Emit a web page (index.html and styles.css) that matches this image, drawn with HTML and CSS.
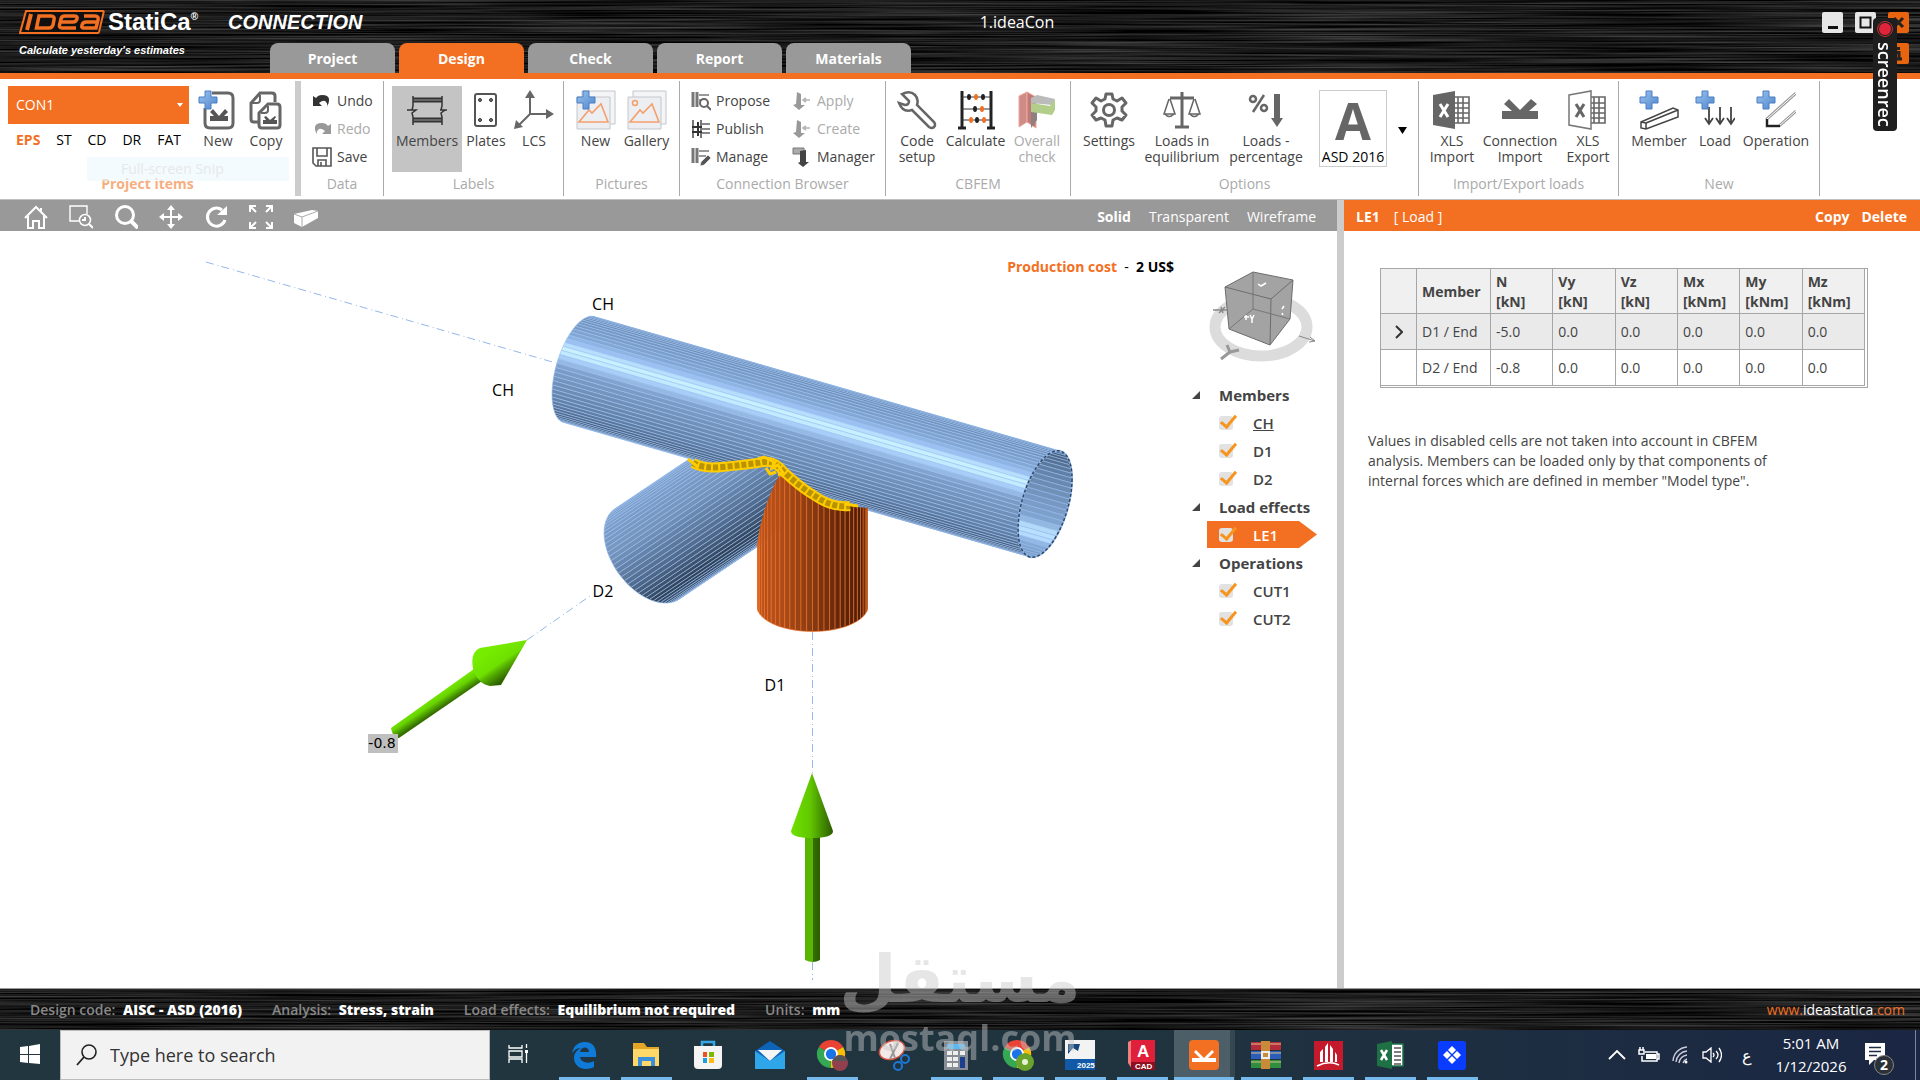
FILE: index.html
```html
<!DOCTYPE html>
<html lang="en">
<head>
  <meta charset="UTF-8" />
  <meta name="viewport" content="width=device-width, initial-scale=1" />
  <title>1.ideaCon</title>
  <link rel="stylesheet" href="styles.css">
</head>
<body>

  <!-- shared icons and filters -->
  <svg class="defs" width="0" height="0" aria-hidden="true">
    <filter id="brushed" x="0" y="0" width="100%" height="100%" color-interpolation-filters="sRGB">
      <feTurbulence type="fractalNoise" baseFrequency="0.004 0.55" numOctaves="3" seed="8" />
      <feColorMatrix values="0.45 0 0 0 -0.12  0.45 0 0 0 -0.12  0.45 0 0 0 -0.12  0 0 0 0 1" />
    </filter>
    <linearGradient id="plusFill" x1="0" y1="0" x2="1" y2="1">
      <stop offset="0" stop-color="#9cc4ee" /><stop offset="1" stop-color="#4f86cc" />
    </linearGradient>
    <symbol id="plus" viewBox="0 0 20 20">
      <path d="M7 1h6v6h6v6h-6v6H7v-6H1V7h6z" fill="url(#plusFill)" stroke="#4a7fc6" />
    </symbol>
    <symbol id="picture" viewBox="0 0 40 40">
      <path d="M6 1h33v33H6z" fill="#f4f5f7" stroke="#c3c6cc" />
      <path d="M1 7h33v32H1z" fill="#eceef2" stroke="#c3c6cc" />
      <path d="M3 32h29L25 14l-9 9-3-3z" fill="none" stroke="#f3a06c" stroke-width="1.6" />
    </symbol>
    <symbol id="sheet" viewBox="0 0 40 40">
      <path d="M22 7h15v26H22M26 7v26M31 7v26M22 13h15M22 18h15M22 23h15M22 28h15" fill="none" stroke="#666" stroke-width="1.6" />
    </symbol>
    <symbol id="chrome" viewBox="0 0 32 32">
      <path d="M16 16L3 8.500A15 15 0 0 1 29 8.500z" fill="#ea4335" />
      <path d="M16 16L29 8.500A15 15 0 0 1 16 31z" fill="#fbbc04" />
      <path d="M16 16v15A15 15 0 0 1 3 8.500z" fill="#34a853" />
      <circle cx="16" cy="16" r="7.500" fill="#fff" /><circle cx="16" cy="16" r="5.500" fill="#1a73e8" />
    </symbol>
    <symbol id="beam" viewBox="0 0 20 20">
      <path d="M2 1v15M6 1v15" stroke="#777" stroke-width="3" fill="none" />
      <path d="M8 4h10M8 9h7" stroke="#999" stroke-width="2" fill="none" />
    </symbol>
    <symbol id="column" viewBox="0 0 20 20">
      <path d="M5 1l4 2v11h4l-6 5-6-5 3-1z" fill="#999" />
      <path d="M11 9h7M14 7l-3 2 3 2" stroke="#b5b5b5" stroke-width="1.6" fill="none" />
    </symbol>
  </svg>

  <header class="titlebar">
    <svg class="metal" aria-hidden="true"><rect width="100%" height="100%" filter="url(#brushed)" /></svg>
    <div class="brand">
      <div class="brand-row">
        <svg class="logo" viewBox="0 0 86 24" width="86" height="24" role="img" aria-label="IDEA">
          <path d="M7 1h77q1 0 .7 1L80 22q-.3 1-1 1H1z" fill="#101010" stroke="#f36f21" stroke-width="2" />
          <path d="M12 4L8 20" stroke="#f36f21" stroke-width="4" />
          <path d="M20 6h12q4 0 3 4l-1 5q-1 3-4 3H17.500z" fill="none" stroke="#f36f21" stroke-width="3.500" />
          <path d="M57 18H43q-3 0-2.500-3l1.500-6q.5-3 4-3h9q4 0 3 3t-4 3H42" fill="none" stroke="#f36f21" stroke-width="3.500" />
          <path d="M65 6h11q4 0 3 4l-2 8H65q-3 0-2-3t4-3h11" fill="none" stroke="#f36f21" stroke-width="3.500" />
        </svg>
        <span class="brand-name">StatiCa<sup>®</sup></span>
        <span class="brand-app">CONNECTION</span>
      </div>
      <p class="slogan">Calculate yesterday's estimates</p>
    </div>
    <nav class="tabs">
      <button>Project</button>
      <button class="active">Design</button>
      <button>Check</button>
      <button>Report</button>
      <button>Materials</button>
    </nav>
    <h1 class="doc-title">1.ideaCon</h1>
    <div class="win-buttons">
      <button aria-label="Minimize"><svg width="21" height="21"><path d="M6 15.500h10" stroke="#111" stroke-width="3" /></svg></button>
      <button aria-label="Maximize"><svg width="21" height="21"><path d="M5.500 5.500h10v10h-10z" stroke="#111" stroke-width="2" fill="none" /></svg></button>
      <button class="orange" aria-label="Close"><svg width="21" height="21"><path d="M6 6l9 9M15 6l-9 9" stroke="#222" stroke-width="3" /></svg></button>
      <button class="orange info" aria-label="About"><svg width="21" height="21"><path d="M10.500 4v3M8 9.500h3V16M7 16h7" stroke="#222" stroke-width="3" fill="none" /></svg></button>
    </div>
  </header>

  <div class="ribbon">
    <section class="group items-group">
      <div class="tools">
        <div class="project-item">
          <div class="select-wrap">
            <select aria-label="Project item"><option>CON1</option></select>
          </div>
          <div class="kinds">
            <button class="on">EPS</button><button>ST</button><button>CD</button><button>DR</button><button>FAT</button>
          </div>
        </div>
        <button class="tool w48">
          <svg width="40" height="40" viewBox="0 0 40 40"><path d="M14 3h16q5 0 5 5v25q0 5-5 5H12q-5 0-5-5V18" fill="none" stroke="#666" stroke-width="3" /><path d="M12 26h4l-4-4 3-3 6 7 6-7 3 3-4 4h4v5H12z" fill="#555" /><use href="#plus" width="20" height="20" /></svg>
          New
        </button>
        <button class="tool w48">
          <svg width="40" height="40" viewBox="0 0 40 40"><path d="M13 32H8q-3 0-3-3V13L14 3h12q3 0 3 3v6" fill="none" stroke="#666" stroke-width="3" /><path d="M14 5v5q0 3-3 3H6" fill="none" stroke="#666" stroke-width="2" /><path d="M13 23l9-9h9q3 0 3 3v18q0 3-3 3H16q-3 0-3-3z" fill="#fff" stroke="#666" stroke-width="3" /><path d="M22 16v4q0 3-3 3h-4" fill="none" stroke="#666" stroke-width="2" /><path d="M17 30h3l-2-3 2-1 4 4 5-4 1 1-2 3h3v4H17z" fill="#555" /></svg>
          Copy
        </button>
      </div>
      <h2 class="accent">Project items</h2>
      <span class="snip">Full-screen Snip</span>
    </section>

    <section class="group w83">
      <div class="tools rows">
        <button class="mini"><svg viewBox="0 0 20 20"><path d="M1 5v10h9l-3-3q5-4 7-1 2 2 1 5 6-12-5-12-4 0-6 3z" fill="#333" /></svg>Undo</button>
        <button class="mini" disabled><svg viewBox="0 0 20 20"><path d="M19 5v10h-9l3-3q-5-4-7-1-2 2-1 5Q-1 4 10 4q4 0 6 3z" fill="#999" /></svg>Redo</button>
        <button class="mini"><svg viewBox="0 0 20 20"><path d="M1 1h18v18H4l-3-3zM5 1v8h10V1M6 19v-6h8v6M9 15v4" fill="none" stroke="#555" stroke-width="1.6" /></svg>Save</button>
      </div>
      <h2>Data</h2>
    </section>

    <section class="group w180">
      <div class="tools pad8">
        <button class="tool w70 selected">
          <svg width="40" height="40" viewBox="0 0 40 40"><path d="M6 10h29M6 30h29" stroke="#333" stroke-width="5" /><path d="M6 10h29M6 30h29" stroke="#999" /><path d="M6 6v10l-1 4h4l-4 3 1 4v8M35 6v10l-1 4h4l-4 3 1 4v8M0 20h9M33 20h7" stroke="#333" stroke-width="1.500" fill="none" /></svg>
          Members
        </button>
        <button class="tool w48">
          <svg width="40" height="40" viewBox="0 0 40 40"><rect x="9" y="4" width="21" height="32" rx="2" fill="#fff" stroke="#555" stroke-width="2" /><g fill="#777" stroke="#333"><circle cx="14" cy="10" r="1.500" /><circle cx="25" cy="10" r="1.500" /><circle cx="14" cy="30" r="1.500" /><circle cx="25" cy="30" r="1.500" /></g></svg>
          Plates
        </button>
        <button class="tool w48">
          <svg width="40" height="40" viewBox="0 0 40 40"><path d="M16 4v20h20M16 24L3 37" stroke="#666" stroke-width="2" fill="none" /><path d="M16 0l5 8H11zM40 24l-8-5v10zM0 39l2-9 7 7z" fill="#666" /></svg>
          LCS
        </button>
      </div>
      <h2>Labels</h2>
    </section>

    <section class="group w116">
      <div class="tools pad6">
        <button class="tool w51"><svg width="40" height="40" viewBox="0 0 40 40"><use href="#picture" width="40" height="40" /><use href="#plus" width="20" height="20" /></svg>New</button>
        <button class="tool w51"><svg width="40" height="40" viewBox="0 0 40 40"><use href="#picture" width="40" height="40" /><circle cx="8" cy="13" r="2.500" fill="none" stroke="#f3a06c" stroke-width="1.500" /></svg>Gallery</button>
      </div>
      <h2>Pictures</h2>
    </section>

    <section class="group w206">
      <div class="tools pairs">
        <button class="mini"><svg viewBox="0 0 20 20"><use href="#beam" width="20" height="20" /><circle cx="13" cy="12" r="4" fill="#fff" stroke="#666" stroke-width="2" /><path d="M16 15l4 4" stroke="#666" stroke-width="2" /></svg>Propose</button>
        <button class="mini" disabled><svg viewBox="0 0 20 20"><use href="#column" width="20" height="20" /></svg>Apply</button>
        <button class="mini"><svg viewBox="0 0 20 20"><path d="M2 1v18M10 1v18" stroke="#777" stroke-width="2" /><path d="M7 3v14M1 8h10M1 13h10" stroke="#333" stroke-width="2" /><path d="M11 5h8M11 10h8M11 14h8" stroke="#888" stroke-width="2" /></svg>Publish</button>
        <button class="mini" disabled><svg viewBox="0 0 20 20"><use href="#column" width="20" height="20" /></svg>Create</button>
        <button class="mini"><svg viewBox="0 0 20 20"><use href="#beam" width="20" height="20" /><path d="M9 19l1-4 7-7 3 3-7 7z" fill="#555" stroke="#fff" stroke-width=".6" /></svg>Manage</button>
        <button class="mini"><svg viewBox="0 0 20 20"><path d="M1 1h11v6H1z" fill="#aaa" stroke="#777" /><path d="M8 4l6-1v12h3l-6 5-5-4 2-1z" fill="#444" /></svg>Manager</button>
      </div>
      <h2>Connection Browser</h2>
    </section>

    <section class="group w185">
      <div class="tools pad3">
        <button class="tool w56">
          <svg width="40" height="40" viewBox="0 0 40 40"><path d="M5 4q8-4 13 1 4 4 2 10l17 17q2 3 0 5t-5 0L15 20q-9 3-13-7l6 2q4 0 4-4z" fill="#fff" stroke="#666" stroke-width="2.500" /></svg>
          Code setup
        </button>
        <button class="tool w61">
          <svg width="40" height="40" viewBox="0 0 40 40"><path d="M6 1v37M35 1v37M2 38h8M31 38h8" stroke="#222" stroke-width="3" /><path d="M6 7h29M6 19h29M6 30h29" stroke="#333" /><g fill="#222"><ellipse cx="13" cy="7" rx="2" ry="3" /><ellipse cx="27" cy="7" rx="2" ry="3" /><ellipse cx="19" cy="19" rx="2" ry="3" /><ellipse cx="21" cy="30" rx="2" ry="3" /></g><g fill="#f36f21"><ellipse cx="20" cy="7" rx="2" ry="3" /><ellipse cx="26" cy="19" rx="2" ry="3" /><ellipse cx="15" cy="30" rx="2" ry="3" /><ellipse cx="28" cy="30" rx="2" ry="3" /></g></svg>
          Calculate
        </button>
        <button class="tool w62" disabled>
          <svg width="40" height="40" viewBox="0 0 40 40"><path d="M2 6l8-4v30l-8 5z" fill="#cf8b88" stroke="#eba99c" /><path d="M10 2l9 5v31l-9-6z" fill="#c27a78" stroke="#eba99c" /><path d="M14 16l6 3v11l-6 8z" fill="#8f8080" /><path d="M14 8l6-3 18 4-3 6-21-2z" fill="#bbb" /><path d="M14 13l19 3 5-7v11l-3 5-21-3z" fill="#b3cd8b" /></svg>
          Overall check
        </button>
      </div>
      <h2>CBFEM</h2>
    </section>

    <section class="group w348">
      <div class="tools pad5">
        <button class="tool w66">
          <svg width="40" height="40" viewBox="0 0 40 40"><path d="M17 4h6l1 5 4 2 5-3 4 5-4 4v4l4 4-4 5-5-2-4 2-1 6h-6l-1-6-4-2-5 2-4-5 4-4v-4l-4-4 4-5 5 3 4-2z" fill="none" stroke="#666" stroke-width="3" stroke-linejoin="round" /><circle cx="20" cy="20" r="5.500" fill="none" stroke="#666" stroke-width="3" /></svg>
          Settings
        </button>
        <button class="tool w80">
          <svg width="40" height="40" viewBox="0 0 40 40"><path d="M20 2v34M8 8h24M13 37h14" stroke="#666" stroke-width="3" /><path d="M7 9L2 24h11L8 9M32 9l-5 15h11L33 9M3 24q4 5 9 0M28 24q4 5 9 0" fill="none" stroke="#666" stroke-width="1.500" /></svg>
          Loads in equilibrium
        </button>
        <button class="tool w88">
          <svg width="40" height="40" viewBox="0 0 40 40"><circle cx="7" cy="9" r="3" fill="none" stroke="#666" stroke-width="2.500" /><circle cx="18" cy="18" r="3" fill="none" stroke="#666" stroke-width="2.500" /><path d="M18 5L7 22" stroke="#666" stroke-width="2.500" /><path d="M28 4h6v24h3l-6 9-6-9h3z" fill="#666" /></svg>
          Loads - percentage
        </button>
        <button class="tool code"><strong>A</strong>ASD 2016</button>
        <button class="more" aria-label="More design codes"><svg width="9" height="7"><path d="M0 0h9L4.500 7z" /></svg></button>
      </div>
      <h2>Options</h2>
    </section>

    <section class="group w200">
      <div class="tools pad3">
        <button class="tool w60"><svg width="40" height="40" viewBox="0 0 40 40"><use href="#sheet" width="40" height="40" /><path d="M1 5l22-4v38L1 35z" fill="#666" /><path d="M8 14l8 13M16 14L8 27" stroke="#fff" stroke-width="3" /></svg>XLS Import</button>
        <button class="tool w76"><svg width="40" height="40" viewBox="0 0 40 40"><path d="M2 21h10l-8-7 5-5 11 11L31 9l6 5-8 7h9v8H2z" fill="#666" /></svg>Connection Import</button>
        <button class="tool w60"><svg width="40" height="40" viewBox="0 0 40 40"><use href="#sheet" width="40" height="40" /><path d="M1 5l22-4v38L1 35z" fill="#fff" stroke="#777" stroke-width="1.500" /><path d="M8 14l8 13M16 14L8 27" stroke="#666" stroke-width="3" /></svg>XLS Export</button>
      </div>
      <h2>Import/Export loads</h2>
    </section>

    <section class="group w201">
      <div class="tools pad9">
        <button class="tool w62"><svg width="40" height="40" viewBox="0 0 40 40"><path d="M2 32l32-14 5 2v7L7 39l-5-1zM2 32l5 1v6M7 33l32-13" fill="#fff" stroke="#444" stroke-width="1.500" /><use href="#plus" width="20" height="20" /></svg>Member</button>
        <button class="tool w50"><svg width="40" height="40" viewBox="0 0 40 40"><path d="M14 17v17M25 17v17M36 17v17M10 28l4 6 4-6M21 28l4 6 4-6M32 28l4 6 4-6" fill="none" stroke="#444" stroke-width="1.800" /><use href="#plus" width="20" height="20" /></svg>Load</button>
        <button class="tool w72"><svg width="40" height="40" viewBox="0 0 40 40"><path d="M40 3L11 29v7h12l17-15" fill="none" stroke="#999" stroke-width="3" /><path d="M40 3L11 29M23 36l17-15" fill="none" stroke="#fff" /><path d="M11 29v7h13" fill="none" stroke="#222" stroke-width="2" /><use href="#plus" width="20" height="20" /></svg>Operation</button>
      </div>
      <h2>New</h2>
    </section>
  </div>

  <main class="workspace">
    <section class="view">
      <div class="view-bar">
        <button aria-label="Home"><svg viewBox="0 0 24 24"><path d="M1 13L12 2l11 11M4 11v12h5v-7h6v7h5V11M17 3v4" fill="none" stroke="#fff" stroke-width="2" /></svg></button>
        <button aria-label="Zoom window"><svg viewBox="0 0 24 24"><path d="M11 16H1V1h17v8" fill="none" stroke="#fff" stroke-width="1.400" /><circle cx="16" cy="15" r="5.500" fill="none" stroke="#fff" stroke-width="1.500" /><path d="M20 19l4 4M16 12v3h-3" stroke="#fff" stroke-width="2" fill="none" /></svg></button>
        <button aria-label="Zoom"><svg viewBox="0 0 24 24"><circle cx="11" cy="10" r="8.500" fill="none" stroke="#fff" stroke-width="3" /><path d="M17 16l7 7" stroke="#fff" stroke-width="4" /></svg></button>
        <button aria-label="Pan"><svg viewBox="0 0 24 24"><path d="M12 3v18M3 12h18" stroke="#fff" stroke-width="2" /><path d="M12 0l4 5H8zM12 24l4-5H8zM0 12l5-4v8zM24 12l-5-4v8z" fill="#fff" /></svg></button>
        <button aria-label="Rotate"><svg viewBox="0 0 24 24"><path d="M18 5a9 9 0 1 0 3 10" fill="none" stroke="#fff" stroke-width="3" /><path d="M23 1v9H13z" fill="#fff" /></svg></button>
        <button aria-label="Fit"><svg viewBox="0 0 24 24"><path d="M1 7V1h6M1 1l6 6M17 1h6v6M23 1l-6 6M1 17v6h6M1 23l6-6M17 23h6v-6M23 23l-6-6" fill="none" stroke="#fff" stroke-width="2" /></svg></button>
        <button aria-label="Perspective"><svg viewBox="0 0 24 24"><path d="M0 9l18-4 6 1v7L8 22l-8-4z" fill="#fff" /><path d="M0 9l8 3 16-6M8 12v10" stroke="#aaa" fill="none" /></svg></button>
        <div class="modes">
          <button class="on">Solid</button>
          <button>Transparent</button>
          <button>Wireframe</button>
        </div>
      </div>

      <div class="canvas">
        <svg id="scene" class="scene" width="1180" height="757" viewBox="0 231 1180 757">
          <defs>
            <clipPath id="clipOpening"><path id="openingClip" /></clipPath>
            <clipPath id="clipD2"><path d="M580 500L690 459Q704 469 765 464L782 470V640H580z" /></clipPath>
            <clipPath id="clipD1"><path d="M757 545Q762 506 781 472Q812 504 868 508V640H757z" /></clipPath>
            <linearGradient id="green"><stop offset="0" stop-color="#6fe000" /><stop offset=".45" stop-color="#62c800" /><stop offset="1" stop-color="#2c5c00" /></linearGradient>
            <linearGradient id="shaft"><stop offset="0" stop-color="#57b400" /><stop offset=".5" stop-color="#59b800" /><stop offset=".55" stop-color="#347000" /><stop offset="1" stop-color="#2c5c00" /></linearGradient>
            <linearGradient id="slantShaft" gradientUnits="userSpaceOnUse" x1="430" y1="698" x2="438" y2="710"><stop offset="0" stop-color="#74ea00" /><stop offset=".45" stop-color="#68d400" /><stop offset="1" stop-color="#356f00" /></linearGradient>
            <linearGradient id="slantCone" gradientUnits="userSpaceOnUse" x1="488" y1="652" x2="506" y2="678"><stop offset="0" stop-color="#76ec00" /><stop offset=".5" stop-color="#6fe000" /><stop offset=".65" stop-color="#58b400" /><stop offset="1" stop-color="#2e6200" /></linearGradient>
          </defs>
          <path class="axis" d="M206 262L556 363M527 640L590 596M812.500 632V773M812.500 962V980" />
          <g id="ch"></g>
          <g id="d2" clip-path="url(#clipD2)"></g>
          <g id="d1" clip-path="url(#clipD1)"></g>
          <g id="weld"></g>
          <path d="M391 728L474 669 482 681 399 738Q393 739 391 728z" fill="url(#slantShaft)" />
          <path d="M527 640L480 648Q470 652 473 669 478 684 490 686L501 685z" fill="url(#slantCone)" />
          <path d="M805 830h15v130q-7 4-15 0z" fill="url(#shaft)" />
          <path d="M812 773l21 58q0 7-21 7t-21-7z" fill="url(#green)" />
          <rect x="368" y="734" width="30" height="19" fill="#bfbfbf" />
          <g class="scene-text">
            <text x="603" y="310">CH</text>
            <text x="503" y="396">CH</text>
            <text x="603" y="597">D2</text>
            <text x="775" y="691">D1</text>
            <text class="value" x="382" y="748">-0.8</text>
          </g>
        </svg>

        <p class="cost"><b class="accent">Production cost</b> &nbsp;-&nbsp; <b>2 US$</b></p>

        <aside class="side">
          <svg class="cube" width="110" height="92" viewBox="0 0 110 92">
            <ellipse cx="53" cy="56" rx="46" ry="29" fill="none" stroke="#dcdcdc" stroke-width="11" />
            <path d="M17 16L45 1l40 8-3 39-20 26-41-16z" fill="#a3a3a3" />
            <path d="M17 16l46 12 22-19-40-8zM63 28l-1 46M17 16l4 42 41 16 20-26 3-39" fill="none" stroke="#6d6d6d" />
            <path d="M45 1v37l37 10M45 38L21 58" fill="none" stroke="#777" />
            <path d="M5 39h14M11 42l6-6M13 36l2 6" stroke="#888" stroke-width="1.500" />
            <path d="M91 65l16 5M102 66l5 4-6 1" stroke="#888" fill="none" />
            <path d="M13 88l9-7 9-2M22 81l-3-7" stroke="#999" stroke-width="3" fill="none" />
            <path d="M36 46h5M38 44v5M42 44l2 4 2-4M44 48v4M50 13l3 2 5-3M74 38l2-3M74 42l1 2" stroke="#fff" stroke-width="1.500" fill="none" />
          </svg>
          <ul class="tree">
            <li class="head">Members</li>
            <li><label><input type="checkbox" checked><u>CH</u></label></li>
            <li><label><input type="checkbox" checked>D1</label></li>
            <li><label><input type="checkbox" checked>D2</label></li>
            <li class="head">Load effects</li>
            <li class="current"><label><input type="checkbox" checked>LE1</label></li>
            <li class="head">Operations</li>
            <li><label><input type="checkbox" checked>CUT1</label></li>
            <li><label><input type="checkbox" checked>CUT2</label></li>
          </ul>
        </aside>
      </div>
    </section>

    <section class="props">
      <div class="props-bar">
        <b>LE1</b><span>[ Load ]</span>
        <div class="props-actions"><button>Copy</button><button>Delete</button></div>
      </div>
      <div class="table-frame">
        <table>
          <thead>
            <tr><th class="c-mark"></th><th class="c-member">Member</th><th>N<br>[kN]</th><th>Vy<br>[kN]</th><th>Vz<br>[kN]</th><th>Mx<br>[kNm]</th><th>My<br>[kNm]</th><th>Mz<br>[kNm]</th></tr>
          </thead>
          <tbody>
            <tr class="current"><td class="mark"><svg width="8" height="14"><path d="M1 1l6 6-6 6" fill="none" stroke="#333" stroke-width="2" /></svg></td><td>D1 / End</td><td>-5.0</td><td>0.0</td><td>0.0</td><td>0.0</td><td>0.0</td><td>0.0</td></tr>
            <tr><td></td><td>D2 / End</td><td>-0.8</td><td>0.0</td><td>0.0</td><td>0.0</td><td>0.0</td><td>0.0</td></tr>
          </tbody>
        </table>
      </div>
      <p class="note">Values in disabled cells are not taken into account in CBFEM<br>analysis. Members can be loaded only by that components of<br>internal forces which are defined in member "Model type".</p>
    </section>
  </main>

  <footer class="status">
    <svg class="metal" aria-hidden="true"><rect width="100%" height="100%" filter="url(#brushed)" /></svg>
    <span>Design code: <b>AISC - ASD (2016)</b></span>
    <span>Analysis: <b>Stress, strain</b></span>
    <span>Load effects: <b>Equilibrium not required</b></span>
    <span>Units: <b>mm</b></span>
    <a href="#"><i>www.</i>ideastatica<i>.com</i></a>
  </footer>

  <div class="taskbar">
    <button class="start" aria-label="Start"><svg width="20" height="20"><path d="M0 3l8-1v8H0zM9 2l11-2v10H9zM0 11h8v8l-8-1zM9 11h11v9L9 19z" fill="#fff" /></svg></button>
    <label class="search">
      <svg width="22" height="22" viewBox="0 0 22 22"><circle cx="13" cy="8" r="7" fill="none" stroke="#222" stroke-width="1.600" /><path d="M8 13l-7 8" stroke="#222" stroke-width="1.800" /></svg>
      <input type="text" placeholder="Type here to search" aria-label="Search">
    </label>
    <button class="taskview" aria-label="Task view"><svg width="22" height="20"><path d="M1 1v3h13V1M1 19v-4h13v4M1 7h13v6H1zM18.500 0v4M18.500 9v10" fill="none" stroke="#fff" stroke-width="1.300" /><path d="M17 6h3v3h-3z" fill="#fff" /></svg></button>
    <div class="apps">
      <button class="open" aria-label="Edge"><svg viewBox="0 0 32 32"><path d="M4 14C6 5 12 3 17 3c8 0 12 6 11 15H12c1 6 9 7 14 4v6C16 33 6 28 6 19c0-5 3-8 7-10-5 0-7 3-9 5zm8-1h9c0-6-8-6-9 0z" fill="#0f7ad8" /></svg></button>
      <button class="open" aria-label="File Explorer"><svg viewBox="0 0 32 32"><path d="M3 4h11l3 4h12v19H3z" fill="#e5a526" /><path d="M3 10h26v17H3z" fill="#ffd867" /><path d="M8 27v-9h17v9h-4v-5h-9v5z" fill="#3b8fdc" /></svg></button>
      <button aria-label="Store"><svg viewBox="0 0 32 32"><path d="M10 8V3h12v5" fill="none" stroke="#35a7e6" stroke-width="2.500" /><path d="M2 7h28v19q0 4-4 4H6q-4 0-4-4z" fill="#f4f4f4" /><path d="M11 13h4v5h-4z" fill="#f04e23" /><path d="M17 13h5v5h-5z" fill="#7db700" /><path d="M11 19h4v5h-4z" fill="#1b9de2" /><path d="M17 19h5v5h-5z" fill="#fdb813" /></svg></button>
      <button aria-label="Mail"><svg viewBox="0 0 32 32"><path d="M1 12L16 2l15 10v18H1z" fill="#0d63b8" /><path d="M4 11h24L16 22z" fill="#f5f5f5" /><path d="M1 12l15 10L31 12v18H1z" fill="#2fa6ea" /></svg></button>
      <button class="open" aria-label="Chrome"><svg viewBox="0 0 32 32"><use href="#chrome" width="30" height="30" /><circle cx="24" cy="24" r="8" fill="#93404e" /><path d="M16 22q8-12 16 0z" fill="#555" /></svg></button>
      <button aria-label="Snipping Tool"><svg viewBox="0 0 32 32"><ellipse cx="14" cy="11" rx="13" ry="9" fill="#f3e9e6" stroke="#d35542" stroke-width="1.500" transform="rotate(-20 14 11)" /><path d="M12 5l5 14M20 4l-8 16" stroke="#999" stroke-width="2" /><circle cx="20" cy="27" r="4" fill="none" stroke="#1c78d6" stroke-width="2" /><circle cx="27" cy="20" r="4" fill="none" stroke="#1c78d6" stroke-width="2" /></svg></button>
      <button class="open" aria-label="Calculator"><svg viewBox="0 0 32 32"><path d="M4 2h24v29H4z" fill="#868d94" /><path d="M7 5h18v5H7z" fill="#5cb8f2" /><path d="M7 12h5v4H7zM13 12h5v4h-5zM20 12h5v4h-5zM7 18h5v4H7zM13 18h5v4h-5zM7 24h5v4H7zM13 24h5v4h-5z" fill="#eee" /><path d="M20 18h5v11h-5z" fill="#1c3f8f" /></svg></button>
      <button class="open" aria-label="Chrome profile"><svg viewBox="0 0 32 32"><use href="#chrome" width="30" height="30" /><circle cx="23" cy="23" r="9" fill="#6aa32b" /><circle cx="23" cy="23" r="3" fill="#e4f1d4" /></svg></button>
      <button class="open" aria-label="Tekla 2025"><svg viewBox="0 0 32 32"><path d="M1 1h30v30H1z" fill="#f3f3f3" /><path d="M1 20h30v11H1z" fill="#1259a8" /><path d="M4 5h12l-2 7-5-3-5 6z" fill="#14467f" /><text x="13" y="29" class="tiny">2025</text></svg></button>
      <button class="open" aria-label="AutoCAD"><svg viewBox="0 0 32 32"><path d="M2 3l4-2v29l-4-6z" fill="#f07f7f" /><path d="M5 1h24v30H5z" fill="#e0203a" /><path d="M5 23h24v8H5z" fill="#8e0f22" /><text x="11" y="18" class="big">A</text><text x="9" y="30" class="tiny">CAD</text></svg></button>
      <button class="open focus" aria-label="IDEA StatiCa Connection"><svg viewBox="0 0 32 32"><rect x="1" y="1" width="30" height="30" rx="4" fill="#f36f21" /><path d="M4 19h8L6 13l2-2 8 8 8-8 2 2-6 6h8v4H4z" fill="#fff" /></svg></button>
      <button class="open" aria-label="WinRAR"><svg viewBox="0 0 32 32"><path d="M1 3h30v8H1z" fill="#b52b3c" /><path d="M1 12h30v8H1z" fill="#2c5db8" /><path d="M1 21h30v8H1z" fill="#2f8f3e" /><path d="M1 5h30M1 14h30M1 23h30" stroke="#d9c28a" /><path d="M11 2h9v28h-9z" fill="#c98b3a" /><path d="M12 13h7v6h-7z" fill="none" stroke="#eee" stroke-width="2" /></svg></button>
      <button class="open" aria-label="Structural design"><svg viewBox="0 0 32 32"><path d="M2 2h29v29H2z" fill="#c51a2c" /><path d="M8 23V13l3-3v13M13 23V8l3-4v19M18 23V6l3 4v13M23 23V13l2 3v7" fill="#fff" /><path d="M5 27q12-6 22-1" stroke="#fff" stroke-width="1.500" fill="none" /></svg></button>
      <button class="open" aria-label="Excel"><svg viewBox="0 0 32 32"><path d="M16 5h13v22H16z" fill="#fff" stroke="#1e7145" stroke-width="1.500" /><path d="M20 9h7M20 13h7M20 17h7M20 21h7M20 25h7" stroke="#555" stroke-width="1.500" /><path d="M3 5l15-3v28L3 27z" fill="#1e7145" /><path d="M7 11l6 10M13 11L7 21" stroke="#fff" stroke-width="2.500" /></svg></button>
      <button class="open" aria-label="Screenrec"><svg viewBox="0 0 32 32"><rect x="2" y="2" width="28" height="29" rx="3" fill="#0a3cff" /><path d="M16 7l4 4-4 4-4-4zM16 17l4 4-4 4-4-4zM11 12l4 4-4 4-4-4zM21 12l4 4-4 4-4-4z" fill="#fff" /></svg></button>
    </div>
    <div class="tray">
      <svg width="18" height="12"><path d="M1 10l8-8 8 8" fill="none" stroke="#fff" stroke-width="1.800" /></svg>
      <svg width="22" height="16"><path d="M7 5h12v9H4V9M19 7h2v5h-2M1 3h5v4H1zM2 0v3M5 0v3" fill="none" stroke="#fff" stroke-width="1.500" /><path d="M8 7h10v5H8z" fill="#fff" /></svg>
      <svg width="18" height="18"><path d="M1 15A15 15 0 0 1 15 1M4 16A12 12 0 0 1 15 5M7 17a9 9 0 0 1 8-8M11 17a6 6 0 0 1 4-4" fill="none" stroke="#ccd" stroke-width="1.400" /><circle cx="14" cy="16" r="1.500" fill="#fff" /></svg>
      <svg width="20" height="16"><path d="M1 5h3l5-4v14l-5-4H1zM11 6q2 2 0 4M14 4q4 4 0 8M17 1q5 7 0 14" fill="none" stroke="#fff" stroke-width="1.300" /></svg>
      <span class="lang" lang="ar">ع</span>
      <time>5:01 AM<br>1/12/2026</time>
      <button class="notes" aria-label="2 notifications"><svg width="30" height="32"><path d="M1 2h20v17H10l-5 5v-5H1z" fill="#fff" /><path d="M5 6.500h12M5 10.500h12M5 14.500h8" stroke="#1c2c44" stroke-width="1.300" /></svg><b>2</b></button>
    </div>
  </div>

  <!-- overlays -->
  <div class="screenrec"><i></i><span>screenrec</span></div>
  <div class="watermark"><span lang="ar">مستقل</span><span>mostaql.com</span></div>

  <script src="scene.js"></script>
</body>
</html>
```
FILE: scene.js
```js
const NS = 'http://www.w3.org/2000/svg';

function add(parent, d, attrs) {
  const el = document.createElementNS(NS, 'path');
  el.setAttribute('d', d);
  for (const key in attrs) el.setAttribute(key, attrs[key]);
  parent.appendChild(el);
}

// point on a skewed ellipse: x = a cos t, y = b cos t + c sin t
function rim(e, t) {
  return [e.x + e.a * Math.cos(t), e.y + e.b * Math.cos(t) + e.c * Math.sin(t)];
}

// angle where the rim runs parallel to the tube
function tangent(e, dir) {
  return Math.atan2(e.c * dir[0], e.b * dir[0] - e.a * dir[1]);
}

function shade(stops, f) {
  let i = 1;
  while (i < stops.length - 1 && f > stops[i][0]) i++;
  const [p, from] = stops[i - 1];
  const [q, to] = stops[i];
  const k = Math.min(1, Math.max(0, (f - p) / (q - p)));
  return 'rgb(' + from.map((v, j) => Math.round(v + (to[j] - v) * k)).join(',') + ')';
}

// strips along a tube between two angles of its end rim
function tube(id, e, dir, t0, t1, count, stops, line) {
  const g = document.getElementById(id);
  for (let i = 0; i < count; i++) {
    const p = rim(e, t0 + (t1 - t0) * i / count);
    const q = rim(e, t0 + (t1 - t0) * (i + 1) / count);
    const d = `M${p}L${q}L${q[0] + dir[0]} ${q[1] + dir[1]}L${p[0] + dir[0]} ${p[1] + dir[1]}z`;
    add(g, d, { fill: shade(stops, (i + 0.5) / count), stroke: line, 'stroke-width': 0.6 });
  }
}

// chord CH
const blueLine = '#98c0f2';
const left = { x: 579, y: 369.5, a: 27, b: -25, c: 47 };
const chDir = [466, 134.5];
const chStart = tangent(left, chDir) + Math.PI;
tube('ch', left, chDir, chStart, chStart - Math.PI, 38, [
  [0, [60, 84, 116]], [0.12, [106, 138, 178]], [0.3, [130, 166, 210]], [0.37, [160, 200, 250]],
  [0.39, [200, 240, 255]], [0.43, [200, 240, 255]], [0.45, [176, 214, 255]], [0.52, [124, 158, 200]],
  [0.75, [96, 126, 164]], [0.88, [66, 88, 118]], [1, [24, 36, 52]]
], blueLine);

// open right end
const right = { ...left, x: 1045, y: 504 };
let ring = '';
for (let i = 0; i < 60; i++) ring += (i ? 'L' : 'M') + rim(right, i * Math.PI / 30);
ring += 'z';
document.getElementById('openingClip').setAttribute('d', ring);
const ch = document.getElementById('ch');
add(ch, ring, { fill: '#7596c2' });
const inner = document.createElementNS(NS, 'g');
inner.setAttribute('clip-path', 'url(#clipOpening)');
inner.id = 'inner';
ch.appendChild(inner);
tube('inner', { ...right, x: right.x - 60, y: right.y - 17 }, [60, 17], chStart, chStart + Math.PI, 30, [
  [0, [50, 68, 92]], [0.3, [100, 130, 168]], [0.6, [130, 166, 210]], [0.66, [190, 228, 255]],
  [0.72, [180, 218, 255]], [0.76, [136, 172, 218]], [1, [106, 138, 180]]
], blueLine);
add(ch, ring, { fill: 'none', stroke: '#8fb6ea', 'stroke-width': 2 });
add(ch, ring, { fill: 'none', stroke: '#33465f', 'stroke-width': 1.5, 'stroke-dasharray': '3 2' });

// diagonal D2
const d2 = { x: 647, y: 554, a: 43, b: 21, c: 44.3 };
const d2Dir = [170, -114];
const d2Start = tangent(d2, d2Dir);
tube('d2', d2, d2Dir, d2Start + Math.PI, d2Start, 36, [
  [0, [104, 136, 176]], [0.15, [126, 160, 204]], [0.4, [116, 148, 188]], [0.6, [82, 108, 142]],
  [0.78, [48, 66, 88]], [1, [70, 96, 130]]
], blueLine);

// selected post D1
tube('d1', { x: 812.5, y: 606, a: 55.5, b: 0, c: 25.5 }, [0, -150], Math.PI, 0, 30, [
  [0, [190, 86, 30]], [0.3, [176, 78, 26]], [0.5, [136, 58, 18]], [0.65, [100, 40, 12]], [1, [56, 22, 6]]
], '#f36f21');

// weld beads along the cut
const weld = document.getElementById('weld');
const bead = 'M693 463Q704 469 722 467Q745 465 764 462Q774 460 784 472Q800 487 815 496Q832 508 850 506';
add(weld, bead, { fill: 'none', stroke: '#ffcc00', 'stroke-width': 10 });
add(weld, bead, { fill: 'none', stroke: '#b89200', 'stroke-width': 6, 'stroke-dasharray': '5 2' });
add(weld, 'M688 459l10 8M845 504l13 2M758 459l6-2 10 5-2 6 6-3 5 8-5 2M766 468l4 6 6-2', { fill: 'none', stroke: '#ffcc00', 'stroke-width': 3 });
```
FILE: styles.css
```css
* {
  box-sizing: border-box;
}

body {
  margin: 0;
  height: 100vh;
  display: flex;
  flex-direction: column;
  overflow: hidden;
  background: #fff;
  color: #444;
  font-family: "Open Sans", "Noto Sans", sans-serif;
  font-size: 14px;
  line-height: 16px;
}

button {
  border: none;
  background: none;
  padding: 0;
  margin: 0;
  color: inherit;
  font: inherit;
  cursor: pointer;
}

h1, h2, p, ul {
  margin: 0;
  padding: 0;
  font-weight: normal;
}

.defs {
  position: absolute;
}

.accent {
  color: #f36f21;
}

.metal {
  position: absolute;
  inset: 0;
  width: 100%;
  height: 100%;
  z-index: -1;
}

/* title bar */
.titlebar {
  position: relative;
  z-index: 0;
  flex: none;
  height: 79px;
  display: flex;
  border-bottom: 6px solid #f36f21;
  background: #111;
  color: #fff;
}

.brand {
  flex: none;
  width: 270px;
  padding: 9px 0 0 19px;
  white-space: nowrap;
}

.brand-row {
  display: flex;
  align-items: center;
  height: 26px;
}

.brand-row > * {
  flex: none;
}

.brand-name {
  margin-left: 3px;
  width: 120px;
  font: bold 24px/26px "Liberation Sans", Arial, sans-serif;
}

.brand-name sup {
  font-size: 10px;
  line-height: 10px;
  vertical-align: 10px;
}

.brand-app {
  font: italic bold 20px/26px "Liberation Sans", Arial, sans-serif;
}

.slogan {
  margin-top: 7px;
  font: italic bold 11px/16px "Liberation Sans", Arial, sans-serif;
}

.tabs {
  display: flex;
  align-items: flex-end;
  gap: 4px;
}

.tabs button {
  width: 125px;
  height: 30px;
  padding-top: 1px;
  border-radius: 8px 8px 0 0;
  background: #999;
  font-weight: bold;
}

.tabs .active {
  background: #f36f21;
}

.doc-title {
  position: absolute;
  top: 12px;
  left: 0;
  right: 0;
  padding-left: 114px;
  text-align: center;
  font-size: 16px;
  line-height: 20px;
  pointer-events: none;
}

.win-buttons {
  margin-left: auto;
  padding: 12px 11px 0 0;
  display: grid;
  grid-template-columns: repeat(3, 21px);
  grid-auto-rows: 21px;
  gap: 10px 12px;
}

.win-buttons button {
  border-radius: 2px;
  background: #e6e6e6;
}

.win-buttons .orange {
  background: #e8640f;
}

.win-buttons .info {
  grid-column: 3;
}

.win-buttons svg {
  display: block;
}

/* ribbon */
.ribbon {
  flex: none;
  height: 121px;
  display: flex;
  padding: 2px 0 3px;
  border-bottom: 1px solid #c0c0c0;
}

.group {
  position: relative;
  display: flex;
  flex-direction: column;
  justify-content: space-between;
  border-right: 1px solid #aaa;
}

.group h2 {
  padding-bottom: 4px;
  text-align: center;
  font-size: 14px;
  line-height: 16px;
  color: #aaa;
}

.items-group {
  width: 301px;
  border-right: 6px solid #ccc;
}

.group .accent {
  color: #f6ae80;
  font-weight: bold;
}

.w83 { width: 83px; }
.w116 { width: 116px; }
.w180 { width: 180px; }
.w185 { width: 185px; }
.w200 { width: 200px; }
.w201 { width: 201px; }
.w206 { width: 206px; }
.w348 { width: 348px; }

.tools {
  display: flex;
  padding-top: 5px;
}

.pad3 { padding-left: 3px; }
.pad5 { padding-left: 5px; }
.pad6 { padding-left: 6px; }
.pad8 { padding-left: 8px; }
.pad9 { padding-left: 9px; }

.tool {
  flex: none;
  height: 86px;
  padding-top: 4px;
  display: flex;
  flex-direction: column;
  align-items: center;
  gap: 3px;
}

.tool:disabled, .mini:disabled {
  color: #aaa;
}

.tool.selected {
  background: #c4c4c4;
}

.w48 { width: 48px; }
.w50 { width: 50px; }
.w51 { width: 51px; }
.w56 { width: 56px; }
.w60 { width: 60px; }
.w61 { width: 61px; }
.w62 { width: 62px; }
.w66 { width: 66px; }
.w70 { width: 70px; }
.w72 { width: 72px; }
.w76 { width: 76px; }
.w80 { width: 80px; }
.w88 { width: 88px; }

.project-item {
  width: 194px;
  padding-left: 8px;
}

.select-wrap {
  position: relative;
  width: 181px;
}

.select-wrap::after {
  content: "";
  position: absolute;
  right: 6px;
  top: 17px;
  border: 3px solid transparent;
  border-top: 4px solid #fff;
}

.select-wrap select {
  appearance: none;
  width: 100%;
  height: 38px;
  padding: 0 8px;
  border: none;
  border-radius: 0;
  background: #f36f21;
  color: #fff;
  font: inherit;
}

.kinds {
  display: flex;
  justify-content: space-between;
  width: 181px;
  margin-top: 8px;
  padding: 0 8px;
  color: #000;
}

.kinds .on {
  color: #f36f21;
  font-weight: bold;
}

.snip {
  position: absolute;
  left: 87px;
  top: 76px;
  width: 202px;
  padding-left: 34px;
  background: rgba(235, 248, 255, 0.6);
  color: #e8e8e8;
  line-height: 24px;
}

.rows {
  flex-direction: column;
  padding: 6px 0 0 11px;
}

.pairs {
  display: grid;
  grid-template-columns: 101px auto;
  padding: 6px 0 0 11px;
}

.mini {
  display: flex;
  align-items: center;
  gap: 5px;
  height: 28px;
}

.mini svg {
  flex: none;
  width: 20px;
  height: 20px;
}

.tool.code {
  width: 68px;
  height: 77px;
  margin: 4px 0 0 9px;
  padding: 0;
  border: 1px solid #ccc;
  gap: 0;
  color: #000;
  white-space: nowrap;
}

.code strong {
  font-size: 52px;
  line-height: 58px;
  color: #666;
}

.more {
  width: 33px;
}

/* workspace */
.workspace {
  flex: 1;
  min-height: 0;
  display: flex;
  border-bottom: 1px solid #999;
}

.view {
  flex: 1;
  min-width: 0;
  display: flex;
  flex-direction: column;
  border-right: 7px solid #ccc;
}

.view-bar {
  flex: none;
  height: 31px;
  padding: 2px 21px 0 24px;
  display: flex;
  align-items: center;
  gap: 21px;
  background: #999;
  color: #fff;
}

.view-bar svg {
  display: block;
  width: 24px;
  height: 24px;
}

.modes {
  margin-left: auto;
  display: flex;
  gap: 18px;
}

.modes .on {
  font-weight: bold;
}

.canvas {
  position: relative;
  flex: 1;
  min-height: 0;
  display: flex;
  justify-content: space-between;
}

.scene {
  display: block;
  flex: none;
}

.axis {
  fill: none;
  stroke: #94b8ea;
  stroke-dasharray: 8 4 1 3;
}

.scene-text {
  fill: #000;
  font-size: 16px;
  text-anchor: middle;
}

.scene-text .value {
  font: 14px "DejaVu Sans", sans-serif;
}

.cost {
  position: absolute;
  top: 28px;
  right: 163px;
  color: #000;
}

.side {
  width: 147px;
  padding-top: 40px;
}

.cube {
  display: block;
  margin-left: 18px;
}

.tree {
  margin-top: 18px;
  list-style: none;
  font-size: 15px;
  font-weight: 600;
}

.tree li {
  position: relative;
  height: 28px;
  padding-left: 29px;
  line-height: 28px;
}

.tree .head {
  font-weight: bold;
}

.head::before {
  content: "";
  position: absolute;
  left: 2px;
  top: 10px;
  border-left: 8px solid transparent;
  border-bottom: 8px solid #444;
}

.tree label {
  position: relative;
  display: flex;
  align-items: center;
}

.tree input {
  appearance: none;
  position: relative;
  width: 14px;
  height: 14px;
  margin: 0 20px 0 0;
  border-radius: 3px;
  background: #e2e2e2;
}

.tree input:checked::after {
  content: "";
  position: absolute;
  left: 5px;
  top: -4px;
  width: 6px;
  height: 13px;
  border: solid #f7941d;
  border-width: 0 3px 3px 0;
  transform: rotate(40deg);
}

.tree .current {
  color: #fff;
}

.tree .current::before {
  content: "";
  position: absolute;
  left: 17px;
  top: 0;
  width: 110px;
  height: 27px;
  background: #f36f21;
  clip-path: polygon(0 0, 92px 0, 100% 50%, 92px 100%, 0 100%);
}

/* properties */
.props {
  width: 576px;
}

.props-bar {
  display: flex;
  align-items: center;
  height: 31px;
  padding: 2px 13px 0 12px;
  gap: 14px;
  background: #f36f21;
  color: #fff;
}

.props-actions {
  margin-left: auto;
  display: flex;
  gap: 12px;
  font-weight: bold;
}

.table-frame {
  width: 488px;
  margin: 37px 0 0 36px;
  padding: 0 2px 1px 0;
  border: 1px solid #a6a6a6;
}

table {
  width: 485px;
  margin: -1px 0 0 -1px;
  border-collapse: collapse;
  table-layout: fixed;
}

th, td {
  height: 36px;
  padding: 0 5px;
  border: 1px solid #a6a6a6;
  text-align: left;
}

th {
  height: 45px;
  padding-top: 2px;
  background: #f0f0f0;
  line-height: 20px;
}

.c-mark {
  width: 36px;
}

.c-member {
  width: 74px;
}

tr.current td {
  background: #eaeaea;
}

td.mark {
  text-align: center;
}

td svg {
  display: block;
  margin: auto;
}

.note {
  margin: 43px 0 0 24px;
  line-height: 20px;
}

/* status bar */
.status {
  position: relative;
  z-index: 0;
  flex: none;
  height: 41px;
  display: flex;
  align-items: center;
  gap: 30px;
  padding: 1px 15px 0 30px;
  background: #1a1a1a;
  color: #888;
  font-weight: 600;
}

.status b {
  margin-left: 4px;
  color: #fff;
}

.status a {
  margin-left: auto;
  color: #fff;
  font-weight: normal;
  text-decoration: none;
}

.status i {
  color: #f36f21;
  font-style: normal;
}

/* taskbar */
.taskbar {
  flex: none;
  height: 50px;
  display: flex;
  background: linear-gradient(90deg, #21363f, #20343f 60%, #1a2643);
  color: #fff;
}

.start {
  width: 60px;
}

.search {
  width: 430px;
  display: flex;
  align-items: center;
  padding-left: 15px;
  gap: 10px;
  border: 1px solid #bbb;
  background: #f2f2f2;
}

.search input {
  flex: 1;
  border: none;
  outline: none;
  background: none;
  font: 18px "Open Sans", sans-serif;
}

.search input::placeholder {
  color: #333;
}

.taskview {
  width: 58px;
}

.apps {
  display: flex;
  padding-left: 5px;
}

.apps button {
  position: relative;
  width: 62px;
}

.apps svg {
  display: block;
  width: 32px;
  height: 32px;
  margin: 0 auto;
}

.apps .open::after {
  content: "";
  position: absolute;
  left: 6px;
  right: 5px;
  bottom: 0;
  height: 3px;
  background: #76b9ed;
}

.apps .focus {
  background: linear-gradient(90deg, transparent 1px, #4c5e68 1px, #4c5e68 57px, #35474f 57px);
}

.apps .focus::after {
  left: 1px;
  right: 1px;
}

.tiny {
  fill: #fff;
  font: bold 8px "Liberation Sans", sans-serif;
}

.big {
  fill: #fff;
  font: bold 17px "Liberation Sans", sans-serif;
}

.tray {
  margin-left: auto;
  padding-right: 4px;
  display: flex;
  align-items: center;
  gap: 12px;
}

.lang {
  width: 28px;
  padding-left: 8px;
  font: 16px "DejaVu Sans", sans-serif;
}

.tray time {
  width: 74px;
  text-align: center;
  font-size: 15px;
  line-height: 23px;
}

.notes {
  position: relative;
  width: 56px;
  height: 50px;
  padding-left: 4px;
  border-right: 1px solid #7a8792;
}

.notes svg {
  display: block;
  margin-top: 3px;
}

.notes b {
  position: absolute;
  left: 14px;
  top: 25px;
  width: 20px;
  border: 1px solid #888;
  border-radius: 50%;
  background: #2b3136;
  font-size: 14px;
  line-height: 18px;
}

/* overlays */
.screenrec {
  position: fixed;
  top: 18px;
  right: 23px;
  width: 24px;
  height: 113px;
  display: flex;
  flex-direction: column;
  align-items: center;
  gap: 6px;
  padding-top: 4px;
  border-radius: 4px;
  background: #1e1e1e;
  color: #fff;
}

.screenrec i {
  flex: none;
  width: 14px;
  height: 14px;
  border: 1px solid #1e1e1e;
  outline: 1px solid #b33;
  border-radius: 50%;
  background: #e0243a;
}

.screenrec span {
  writing-mode: vertical-rl;
  font-size: 18px;
  line-height: 20px;
  font-weight: 600;
}

.watermark {
  position: fixed;
  left: 44%;
  bottom: 20px;
  width: 12%;
  display: flex;
  flex-direction: column;
  align-items: center;
  color: #c8c8c8;
  opacity: 0.46;
  pointer-events: none;
}

.watermark span {
  font: bold 36px/44px "Open Sans", sans-serif;
}

.watermark span:lang(ar) {
  font: bold 66px/72px "DejaVu Sans", sans-serif;
}
```
